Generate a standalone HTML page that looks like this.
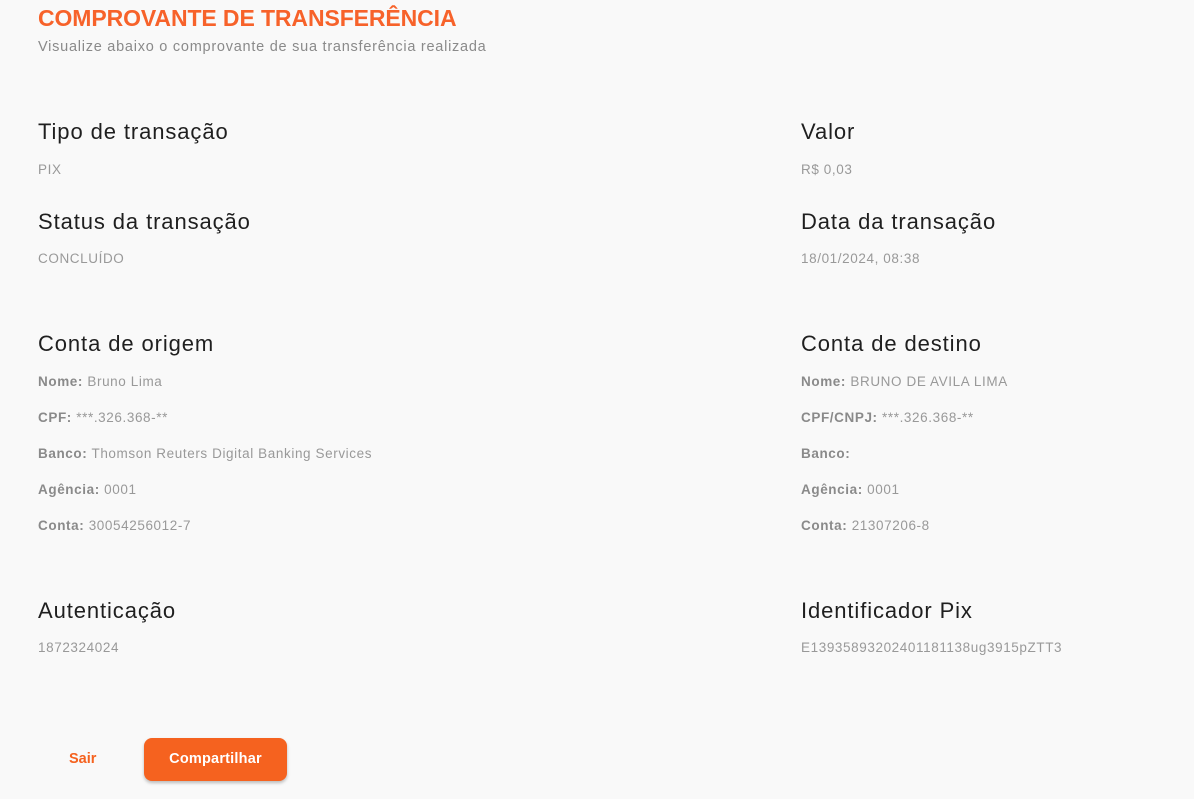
<!DOCTYPE html>
<html><head><meta charset="utf-8"><style>
body{margin:0;width:1194px;height:799px;background:#f9f9f9;font-family:"Liberation Sans",sans-serif;position:relative;overflow:hidden}
.a{position:absolute;white-space:nowrap}
.t{left:38px;top:5px;font-size:23px;font-weight:bold;color:#f7622a;letter-spacing:-0.1px}
.s{left:38px;top:39px;font-size:14.5px;color:#8a8a8a;letter-spacing:0.75px}
.h{font-size:22px;color:#1f1f1f;line-height:26px;letter-spacing:0.9px}
.v{font-size:13.5px;color:#999;line-height:16px;letter-spacing:0.6px}
.v b{color:#8a8a8a}
.btn{left:144px;top:738px;width:143px;height:43px;background:#f5621f;border-radius:8px;box-shadow:0 2px 3px rgba(0,0,0,.25);color:#fff;font-weight:bold;font-size:14.5px;text-align:center;line-height:43px;letter-spacing:0.2px}
.sair{left:69px;top:751px;font-size:14.5px;font-weight:bold;color:#f5621f}
</style></head><body>
<div class="a t">COMPROVANTE DE TRANSFERÊNCIA</div>
<div class="a s">Visualize abaixo o comprovante de sua transferência realizada</div>

<div class="a h" style="left:38px;top:119px">Tipo de transação</div>
<div class="a v" style="left:38px;top:162px">PIX</div>
<div class="a h" style="left:801px;top:119px">Valor</div>
<div class="a v" style="left:801px;top:162px">R$ 0,03</div>

<div class="a h" style="left:38px;top:209px">Status da transação</div>
<div class="a v" style="left:38px;top:251px">CONCLUÍDO</div>
<div class="a h" style="left:801px;top:209px">Data da transação</div>
<div class="a v" style="left:801px;top:251px">18/01/2024, 08:38</div>

<div class="a h" style="left:38px;top:331px">Conta de origem</div>
<div class="a v" style="left:38px;top:374px"><b>Nome:</b> Bruno Lima</div>
<div class="a v" style="left:38px;top:410px"><b>CPF:</b> ***.326.368-**</div>
<div class="a v" style="left:38px;top:446px"><b>Banco:</b> Thomson Reuters Digital Banking Services</div>
<div class="a v" style="left:38px;top:482px"><b>Agência:</b> 0001</div>
<div class="a v" style="left:38px;top:518px"><b>Conta:</b> 30054256012-7</div>

<div class="a h" style="left:801px;top:331px">Conta de destino</div>
<div class="a v" style="left:801px;top:374px"><b>Nome:</b> BRUNO DE AVILA LIMA</div>
<div class="a v" style="left:801px;top:410px"><b>CPF/CNPJ:</b> ***.326.368-**</div>
<div class="a v" style="left:801px;top:446px"><b>Banco:</b></div>
<div class="a v" style="left:801px;top:482px"><b>Agência:</b> 0001</div>
<div class="a v" style="left:801px;top:518px"><b>Conta:</b> 21307206-8</div>

<div class="a h" style="left:38px;top:598px">Autenticação</div>
<div class="a v" style="left:38px;top:640px">1872324024</div>
<div class="a h" style="left:801px;top:598px">Identificador Pix</div>
<div class="a v" style="left:801px;top:640px">E13935893202401181138ug3915pZTT3</div>

<div class="a sair">Sair</div>
<div class="a btn">Compartilhar</div>
</body></html>
